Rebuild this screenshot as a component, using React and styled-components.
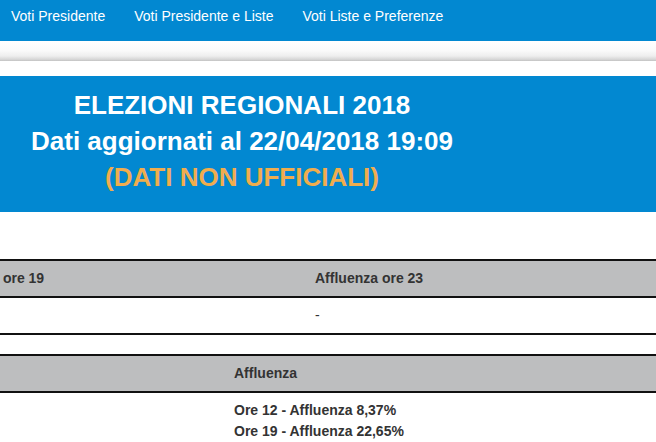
import React from "react";
import styled, { createGlobalStyle } from "styled-components";

const Global = createGlobalStyle`
  html, body { margin: 0; padding: 0; background: #fff; }
  body {
    font-family: "Liberation Sans", Arial, sans-serif;
    color: #333;
    overflow: hidden;
  }
  * { box-sizing: border-box; }
`;

const Page = styled.div`
  width: 656px;
  overflow: hidden;
`;

const NavBar = styled.nav`
  height: 41px;
  background: #0288d1;
  display: flex;
  align-items: flex-start;
  gap: 29px;
  padding: 8px 0 0 11px;
`;

const NavLink = styled.a`
  color: #fff;
  font-size: 14px;
  line-height: 16px;
  text-decoration: none;
  white-space: nowrap;
`;

const ShadowBand = styled.div`
  height: 20px;
  background: linear-gradient(
    to bottom,
    #ffffff 0%,
    #fbfbfb 45%,
    #eeeeee 75%,
    #d6d6d6 92%,
    #c2c2c2 100%
  );
`;

const Banner = styled.header`
  margin-top: 15px;
  height: 136px;
  background: #0288d1;
  padding-top: 11px;
`;

const BannerText = styled.div`
  width: 484px;
  text-align: center;
  font-weight: bold;
  font-size: 26px;
  line-height: 36px;
  color: ${(p) => (p.$warn ? "#f0ad4e" : "#fff")};
  white-space: nowrap;
`;

const Clip = styled.div`
  overflow: hidden;
  margin-top: ${(p) => p.$top}px;
`;

const Table = styled.table`
  border-collapse: collapse;
  margin-left: ${(p) => p.$shift}px;
  width: ${(p) => p.$width}px;
  table-layout: fixed;
  font-size: 14px;
  font-weight: bold;
  color: #333;
`;

const Col = styled.col`
  width: ${(p) => p.$w}px;
`;

const Th = styled.th`
  background: #bdbebf;
  text-align: left;
  padding: 8px;
  height: 35px;
  line-height: 19px;
  border-top: 2px solid #111;
  border-bottom: 2px solid #111;
  white-space: nowrap;
  font-weight: bold;
`;

const Td = styled.td`
  text-align: left;
  vertical-align: top;
  padding: ${(p) => (p.$multi ? "7px 8px 0" : "8px")};
  height: 35px;
  line-height: ${(p) => (p.$multi ? "21px" : "19px")};
  border-bottom: ${(p) => (p.$open ? "none" : "2px solid #111")};
  white-space: nowrap;
  font-weight: ${(p) => (p.$light ? "normal" : "bold")};
`;

const Line = styled.div``;

export default function App() {
  return (
    <Page>
      <Global />
      <NavBar>
        <NavLink href="#">Voti Presidente</NavLink>
        <NavLink href="#">Voti Presidente e Liste</NavLink>
        <NavLink href="#">Voti Liste e Preferenze</NavLink>
      </NavBar>
      <ShadowBand />
      <Banner>
        <BannerText>ELEZIONI REGIONALI 2018</BannerText>
        <BannerText>Dati aggiornati al 22/04/2018 19:09</BannerText>
        <BannerText $warn>(DATI NON UFFICIALI)</BannerText>
      </Banner>

      <Clip $top={47}>
        <Table $shift={-451} $width={1137}>
          <colgroup>
            <Col $w={379} />
            <Col $w={379} />
            <Col $w={379} />
          </colgroup>
          <thead>
            <tr>
              <Th>Affluenza ore 12</Th>
              <Th>Affluenza ore 19</Th>
              <Th>Affluenza ore 23</Th>
            </tr>
          </thead>
          <tbody>
            <tr>
              <Td $light>8,37%</Td>
              <Td $light>22,65%</Td>
              <Td $light>-</Td>
            </tr>
          </tbody>
        </Table>
      </Clip>

      <Clip $top={19}>
        <Table $shift={0} $width={656}>
          <colgroup>
            <Col $w={226} />
            <Col $w={430} />
          </colgroup>
          <thead>
            <tr>
              <Th></Th>
              <Th>Affluenza</Th>
            </tr>
          </thead>
          <tbody>
            <tr>
              <Td $multi $open></Td>
              <Td $multi $open>
                <Line>Ore 12 - Affluenza 8,37%</Line>
                <Line>Ore 19 - Affluenza 22,65%</Line>
              </Td>
            </tr>
          </tbody>
        </Table>
      </Clip>
    </Page>
  );
}
